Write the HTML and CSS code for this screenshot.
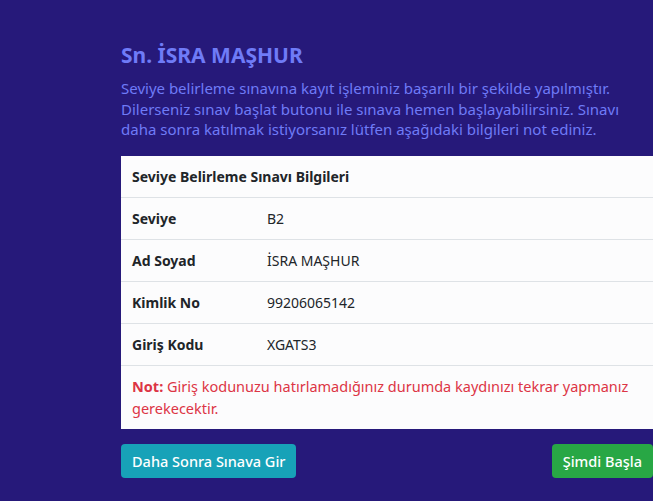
FILE: index.html
```html
<!DOCTYPE html>
<html lang="tr">
<head>
<meta charset="utf-8">
<link rel="stylesheet" href="styles.css">
</head>
<body>
<main class="page">
  <h1 class="title">Sn. İSRA MAŞHUR</h1>
  <p class="intro">Seviye belirleme sınavına kayıt işleminiz başarılı bir şekilde yapılmıştır. Dilerseniz sınav başlat butonu ile sınava hemen başlayabilirsiniz. Sınavı daha sonra katılmak istiyorsanız lütfen aşağıdaki bilgileri not ediniz.</p>
  <section class="info">
    <div class="info-head">Seviye Belirleme Sınavı Bilgileri</div>
    <div class="info-row"><span class="label">Seviye</span><span class="value">B2</span></div>
    <div class="info-row"><span class="label">Ad Soyad</span><span class="value">İSRA MAŞHUR</span></div>
    <div class="info-row"><span class="label">Kimlik No</span><span class="value">99206065142</span></div>
    <div class="info-row"><span class="label">Giriş Kodu</span><span class="value">XGATS3</span></div>
    <p class="info-note"><strong class="note-key">Not:</strong> Giriş kodunuzu hatırlamadığınız durumda kaydınızı tekrar yapmanız gerekecektir.</p>
  </section>
  <div class="actions">
    <button class="btn btn-info">Daha Sonra Sınava Gir</button>
    <button class="btn btn-success">Şimdi Başla</button>
  </div>
</main>
</body>
</html>
```
FILE: styles.css
```css
html, body {
  margin: 0;
  padding: 0;
  background: #26197a;
  height: 100%;
  overflow: hidden;
}
body {
  font-family: "Noto Sans", "Open Sans", sans-serif;
}
.page {
  padding: 38px 0 0 121px;
  width: 532px;
}
.title {
  margin: 0 0 6px;
  font-size: 21px;
  line-height: 34px;
  font-weight: 700;
  color: #6f7bf7;
}
.intro {
  margin: 0 0 16px;
  font-size: 15px;
  line-height: 20.5px;
  color: #6f7bf7;
}
.info {
  background: #fcfcfd;
  color: #212529;
  font-size: 14px;
}
.info-head {
  padding: 12px 11px;
  line-height: 17px;
  font-weight: 700;
  border-bottom: 1px solid #dee2e6;
}
.info-row {
  display: flex;
  padding: 12px 11px;
  line-height: 17px;
  border-bottom: 1px solid #dee2e6;
}
.label {
  width: 135px;
  font-weight: 700;
}
.value {
  flex: 1;
}
.info-note {
  margin: 0;
  padding: 9px 11px 10px;
  line-height: 22px;
  font-size: 14.5px;
  color: #dc3545;
}
.note-key {
  font-weight: 700;
}
.actions {
  display: flex;
  justify-content: space-between;
  margin-top: 15px;
}
.btn {
  font-family: inherit;
  font-size: 14.5px;
  line-height: 20px;
  padding: 7px 11px;
  border: 0;
  border-radius: 4px;
  color: #fff;
  font-weight: 500;
}
.btn-info { background: #17a2b8; }
.btn-success { background: #28a745; }
```
